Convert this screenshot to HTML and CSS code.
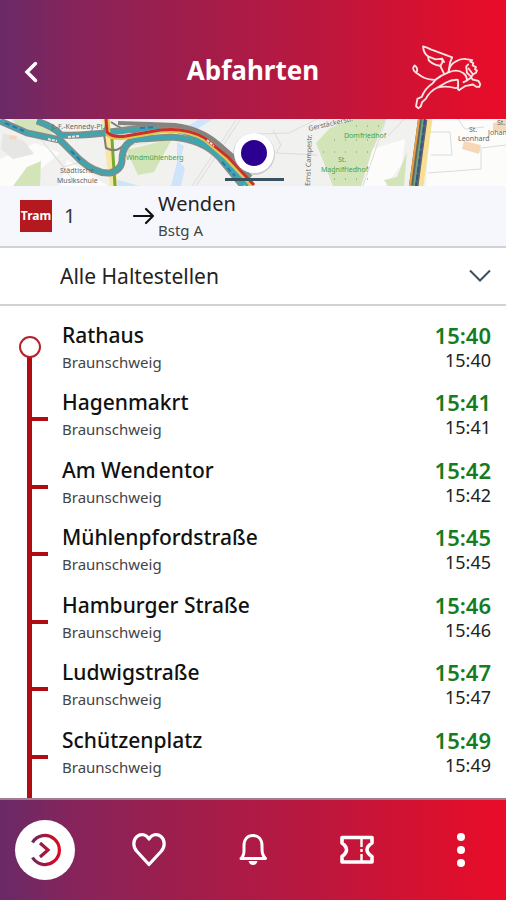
FILE: index.html
```html
<!DOCTYPE html>
<html lang="de">
<head>
<meta charset="utf-8">
<meta name="viewport" content="width=device-width, initial-scale=1">
<title>Abfahrten</title>
<link rel="stylesheet" href="styles.css">
</head>
<body>
<header class="topbar">
  <button class="back" type="button" aria-label="Zurück">
    <svg width="14" height="22" viewBox="0 0 14 22"><path d="M11.500 2.500 3 11l8.500 8.500" fill="none" stroke="#fff" stroke-width="3.500" stroke-linecap="round"/></svg>
  </button>
  <h1 class="title">Abfahrten</h1>
  <svg class="lion" viewBox="30 30 215 196" aria-hidden="true">
    <g fill="none" stroke="#ffe4e4" stroke-width="5.500" stroke-linejoin="round" stroke-linecap="round">
      <path d="M132 119 120 95Q98 92 86 79L84 67Q70 57 69 37L79 40 92 46 156 70 150 84 145 113"/>
      <path d="M84 67 106 76 126 74 127 84 121 95M126 74 132 84"/>
      <path d="M145 113Q150 89 167 82 184 72 198 75L216 78 210 82 219 87 217 94 227 99 224 105 230 109 227 116 219 120 213 128 200 116 198 97 204 91M205 103 216 118"/>
      <path d="M106 137Q124 122 147 114 172 104 189 117 200 124 200 139L213 130 217 136 234 140 240 150 237 158 228 158 218 151 194 156 176 168 173 165 173 154M201 139 190 144"/>
      <path d="M106 137 98 147Q74 163 65 188L52 194 48 216 55 222 62 217 66 204 77 194Q90 170 112 160L138 145Q154 136 173 137L174 154M112 160Q138 154 166 162L174 160"/>
      <path d="M106 137Q82 137 65 127L46 114Q34 104 44 94 56 102 49 115"/>
    </g>
  </svg>
</header>
<main class="content">
  <svg class="map" viewBox="0 0 506 67" preserveAspectRatio="xMidYMid slice" role="img" aria-label="Karte">
    <rect width="506" height="67" fill="#f1f1f0"/>
    <path d="M0 40 35 24 60 34 20 67H0ZM60 67 67 41 92 56 108 67ZM372 30 405 20 402 45 385 67H363ZM430 0H506V67H426Z" fill="#fcfcfb"/>
    <path d="M3 14 24 22 34 35 13 40 1 30Z" fill="#e6e6e5"/>
    <path d="M12 0H37L57 19 44 20 20 11ZM27 48 41 42 40 67H13ZM126 31 172 20 154 53 138 56ZM330 9 352 0H386L372 32 361 67H333L316 24Z" fill="#d3e5b8"/>
    <path d="M199 0H213L194 12H180ZM177 23 184 27 180 43 185 49 181 67H171L177 43ZM118 61 140 67H111Z" fill="#cfe4fb"/>
    <path d="M397 58 402 45 407 33 404 67H388L384 61Z" fill="#d3e5b8"/>
    <path d="M10 16 17 17 16 21 9 20ZM464 22 481 26 479 35 462 30ZM493 4 506 0V12H493Z" fill="#f6d8b8"/>
    <g fill="none" stroke="#dcdcdc" stroke-width="1">
      <path d="M240 1 196 67M236 1 192 67M25 0 74 62M50 31 64 48 80 43M253 15 289 14 317 0M273 11 281 26 276 34 317 36M386 0 363 67M404 0 388 17M428 54 481 50V29L506 26M431 36 452 36 450 13H430M458 0 465 10 484 8"/>
    </g>
    <g fill="none">
      <path d="M106 0 109 30 114 67" stroke="#f8e7a2" stroke-width="8"/>
      <path d="M112 20 115 67" stroke="#78aa32" stroke-width="3"/>
      <path d="M107 0 104 15 106 29Q118 35 125 24M111 3Q122 11 137 14" stroke="#827e76" stroke-width="2"/>
      <g stroke="#858b87" stroke-width="7">
        <path d="M0 2 27 14 60 21 80 41Q96 55 110 54 121 51 122 42 122 20 142 20L171 18Q203 20 220 39L243 67"/>
        <path d="M37 2Q54 8 61 16 84 17 110 13L150 8Q187 4 219 30L250 59"/>
      </g>
      <g stroke="#3fa6b0" stroke-width="4">
        <path d="M0 2 27 14 60 21 80 41Q96 55 110 54 121 51 122 42 122 20 142 20L171 18Q203 20 220 39L243 67"/>
        <path d="M37 2Q54 8 61 16 84 17 110 13L150 10Q192 8 218 35L248 67"/>
      </g>
      <path d="M107 0 108 15Q112 20 126 18L149 14Q182 7 205 20L226 38 252 66" stroke="#dfc653" stroke-width="5"/>
      <path d="M106 0 107 13Q112 19 126 17L149 13Q182 6 205 19L228 38 254 66" stroke="#cb302d" stroke-width="3"/>
      <path d="M118 4 150 5 175 6Q200 9 218 24L250 52" stroke="#868480" stroke-width="4"/>
      <path d="M5 4 24 12M71 32 82 43M140 9 156 8M222 43 235 57" stroke="#2878b0" stroke-width="2" stroke-dasharray="5 3"/>
      <path d="M48 20 57 22M68 18 80 17M134 25 145 24M207 21 214 27" stroke="#e4e4e0" stroke-width="2" stroke-dasharray="3 1"/>
      <path d="M423 0 414 67" stroke="#62685e" stroke-width="10"/>
      <path d="M419 0 410 67" stroke="#ec9e45" stroke-width="2"/>
      <path d="M423 0 414 67" stroke="#70a480" stroke-width="2"/>
      <path d="M425 0 416 67" stroke="#30549c" stroke-width="2" stroke-dasharray="6 2"/>
      <path d="M430 0 421 67" stroke="#f6df92" stroke-width="5"/>
    </g>
    <g class="map-label">
      <text x="52" y="10">J.-F.-Kennedy-Pl.</text>
      <text x="60" y="54">Städtische</text>
      <text x="57" y="64">Musikschule</text>
      <text x="309" y="12" transform="rotate(-13 309 12)">Gerstäckerstr.</text>
      <text x="310" y="67" transform="rotate(-88 310 67)">Ernst Campestr.</text>
      <text x="469" y="13">St.</text><text x="458" y="22">Leonhard</text>
      <text x="497" y="6">St.</text><text x="488" y="16">Johannes</text>
    </g>
    <g class="map-label map-label--park">
      <text x="126" y="41">Windmühlenberg</text>
      <text x="344" y="19">Domfriedhof</text>
      <text x="338" y="43">St.</text><text x="321" y="53">Magnifriedhof</text>
    </g>
    <g fill="none" stroke="#789663" stroke-width="1" stroke-dasharray="1 10">
      <path d="M334 21H378M323 33H370M334 48H370M334 60H370M356 7H382"/>
    </g>
    <circle cx="254" cy="35" r="21" fill="#889" opacity=".35"/>
    <circle cx="254" cy="34" r="20" fill="#fff"/>
    <circle cx="254" cy="34" r="13" fill="#2b0090"/>
    <path d="M225 60.500H284" stroke="#38525f" stroke-width="3"/>
  </svg>
  <section class="line" aria-label="Linie">
    <span class="badge">Tram</span>
    <span class="number">1</span>
    <svg class="arrow" width="24" height="18" viewBox="0 0 24 18" aria-hidden="true"><path d="M2 9H21M14 2 21 9 14 16" fill="none" stroke="#111" stroke-width="2.200" stroke-linecap="round" stroke-linejoin="round"/></svg>
    <div class="direction"><span class="destination">Wenden</span><span class="platform">Bstg A</span></div>
  </section>
  <div class="filter">
    <select class="filter-select" aria-label="Haltestellen"><option>Alle Haltestellen</option></select>
    <svg class="chevron" width="24" height="16" viewBox="0 0 24 16" aria-hidden="true"><path d="M2 2.500 12 12.500 22 2.500" fill="none" stroke="#3b5060" stroke-width="2"/></svg>
  </div>
  <ol class="stops">
    <li class="stop stop--first"><div><h2 class="name">Rathaus</h2><p class="city">Braunschweig</p></div><div class="times"><time class="live">15:40</time><time class="planned">15:40</time></div></li>
    <li class="stop"><div><h2 class="name">Hagenmakrt</h2><p class="city">Braunschweig</p></div><div class="times"><time class="live">15:41</time><time class="planned">15:41</time></div></li>
    <li class="stop"><div><h2 class="name">Am Wendentor</h2><p class="city">Braunschweig</p></div><div class="times"><time class="live">15:42</time><time class="planned">15:42</time></div></li>
    <li class="stop"><div><h2 class="name">Mühlenpfordstraße</h2><p class="city">Braunschweig</p></div><div class="times"><time class="live">15:45</time><time class="planned">15:45</time></div></li>
    <li class="stop"><div><h2 class="name">Hamburger Straße</h2><p class="city">Braunschweig</p></div><div class="times"><time class="live">15:46</time><time class="planned">15:46</time></div></li>
    <li class="stop"><div><h2 class="name">Ludwigstraße</h2><p class="city">Braunschweig</p></div><div class="times"><time class="live">15:47</time><time class="planned">15:47</time></div></li>
    <li class="stop"><div><h2 class="name">Schützenplatz</h2><p class="city">Braunschweig</p></div><div class="times"><time class="live">15:49</time><time class="planned">15:49</time></div></li>
  </ol>
</main>
<nav class="tabs" aria-label="Hauptmenü">
  <button class="tab tab--active" type="button" aria-label="Abfahrten">
    <svg width="34" height="34" viewBox="0 0 34 34"><defs><linearGradient id="ring" gradientUnits="userSpaceOnUse" x1="2" x2="32" y1="0" y2="0"><stop stop-color="#642b60"/><stop offset=".65" stop-color="#b51236"/><stop offset="1" stop-color="#df0820"/></linearGradient></defs><path d="M4.500 9.500A14.500 14.500 0 1 1 4.500 24.500M12 10 20 17 12 24" fill="none" stroke="url(#ring)" stroke-width="3.200"/></svg>
  </button>
  <button class="tab" type="button" aria-label="Favoriten">
    <svg width="36" height="36" viewBox="0 0 36 36"><path d="M18 32.500 6 19.500C1.500 14.500 2 8 6 4.500 10 1 15.500 2.500 18 7 20.500 2.500 26 1 30 4.500 34 8 34.500 14.500 30 19.500Z" fill="none" stroke="#fff" stroke-width="3.200" stroke-linejoin="round"/></svg>
  </button>
  <button class="tab" type="button" aria-label="Meldungen">
    <svg width="32" height="36" viewBox="0 0 32 36"><path d="M4 26.500C7.500 23 7 20 7 13.500 7 7.500 10.500 3.500 16 3.500S25 7.500 25 13.500C25 20 25 23 28.500 26.500Z" fill="none" stroke="#fff" stroke-width="3" stroke-linejoin="round"/><path d="M11.500 29H20.500Q19.500 33 16 33T11.500 29Z" fill="#fff"/></svg>
  </button>
  <button class="tab" type="button" aria-label="Tickets">
    <svg width="36" height="32" viewBox="0 0 36 32"><path d="M3 3.500H33V9Q23 15.500 33 22.500V28H3V22.500Q12 15.500 3 9Z" fill="none" stroke="#fff" stroke-width="3.600" stroke-linejoin="round"/><path d="M22.500 5V27" stroke="#fff" stroke-width="2.400" stroke-dasharray="8 2 3 2"/></svg>
  </button>
  <button class="tab" type="button" aria-label="Mehr">
    <svg width="10" height="36" viewBox="0 0 10 36"><g fill="#fff"><circle cx="5" cy="5" r="4"/><circle cx="5" cy="18" r="4"/><circle cx="5" cy="31" r="4"/></g></svg>
  </button>
</nav>
</body>
</html>
```
FILE: styles.css
```css
* { box-sizing: border-box; }

body {
  margin: 0;
  min-height: 100vh;
  display: flex;
  flex-direction: column;
  background: #fff;
  color: #111;
  font-family: "Noto Sans", "Liberation Sans", sans-serif;
}

button { border: 0; padding: 0; background: none; cursor: pointer; }
svg { display: block; }
h1, h2, p { margin: 0; }

.topbar, .tabs {
  background: linear-gradient(90deg, #692a66 0%, #87245b 15%, #a11d4a 38%, #bd173e 64%, #d61130 84%, #e90c28 100%);
}

.topbar {
  display: grid;
  grid-template-columns: 72px 1fr 72px;
  align-items: center;
  padding: 44px 24px 9px;
}
.back { justify-self: start; margin-bottom: 10px; }
.title { color: #fff; font-size: 26px; line-height: 36px; text-align: center; font-weight: 700; margin-bottom: 14px; }
.lion { width: 100%; }

.content { flex: 1; display: flex; flex-direction: column; }

.map { width: 100%; min-height: 67px; }
.map-label { font-size: 7px; fill: #666; }
.map-label--park { fill: #42a34c; }

.line {
  display: flex;
  align-items: center;
  padding: 4px 20px;
  min-height: 62px;
  background: #f5f7fc;
  border-bottom: 2px solid #d0d3d6;
}
.badge {
  width: 32px;
  line-height: 32px;
  background: #b41920;
  color: #fff;
  font-size: 12px;
  font-weight: 700;
  text-align: center;
}
.number { width: 80px; padding-left: 12px; font-size: 20px; line-height: 28px; color: #333; }
.direction { display: flex; flex-direction: column; padding-left: 2px; }
.destination { font-size: 20px; line-height: 28px; color: #222; }
.platform { font-size: 15px; line-height: 24px; color: #444; }

.filter { display: grid; align-items: center; border-bottom: 2px solid #d0d3d6; }
.filter-select {
  grid-area: 1 / 1;
  appearance: none;
  width: 100%;
  height: 56px;
  padding: 0 48px 0 60px;
  border: 0;
  background: #fff;
  color: #222;
  font: 21px "Noto Sans", sans-serif;
}
.chevron { grid-area: 1 / 1; justify-self: end; margin-right: 14px; pointer-events: none; }

.stops {
  flex: 1;
  display: flex;
  flex-direction: column;
  position: relative;
  margin: 0;
  padding: 14px 0 6px;
  list-style: none;
}
.stops::before {
  content: "";
  position: absolute;
  left: 27px;
  top: 48px;
  bottom: 0;
  width: 5px;
  background: #b00d12;
}
.stop {
  flex: 1;
  display: flex;
  justify-content: space-between;
  position: relative;
  padding: 0 15px 0 62px;
}
.stop::before {
  content: "";
  position: absolute;
  left: 30px;
  top: 30px;
  width: 18px;
  height: 4px;
  background: #b00d12;
}
.stop--first::before {
  box-sizing: border-box;
  left: 19px;
  top: 16px;
  width: 22px;
  height: 22px;
  border: 2px solid #b52229;
  border-radius: 50%;
  background: #fff;
}
.name { font-size: 21px; line-height: 30px; font-weight: 500; }
.city { font-size: 15px; line-height: 24px; color: #444; }
.times { display: flex; flex-direction: column; text-align: right; }
.live { font-size: 22px; line-height: 30px; font-weight: 600; color: #147c22; }
.planned { font-size: 18px; line-height: 20px; color: #222; }

.tabs {
  display: flex;
  justify-content: space-between;
  padding: 20px 15px;
  border-top: 2px solid #a57b91;
}
.tab { display: grid; place-items: center; width: 60px; height: 60px; border-radius: 50%; }
.tab--active { background: #fff; }
```
